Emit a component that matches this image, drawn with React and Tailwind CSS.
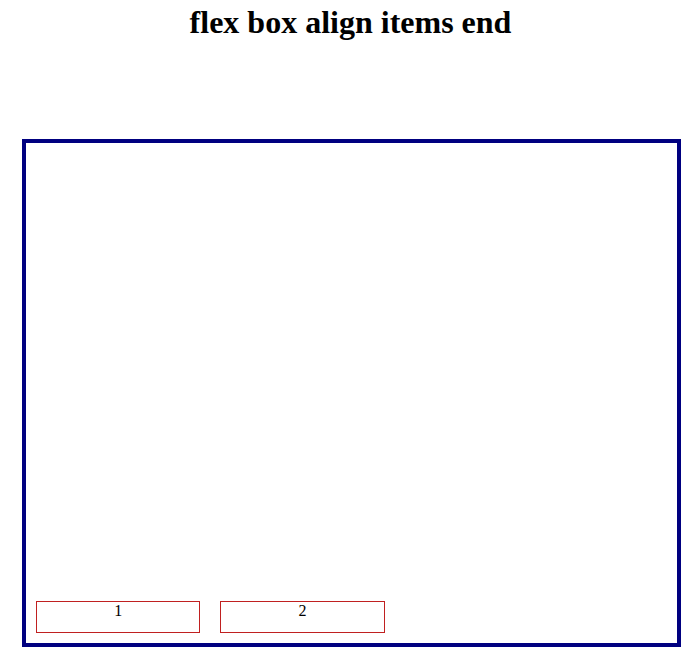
export default function App() {
  return (
    <div className="bg-white min-h-[647px] font-['Liberation_Serif',serif] text-black">
      <h1 className="pl-[10px] pt-[4px] text-center text-[32px] font-bold leading-[37px]">
        flex box align items end
      </h1>
      <div className="ml-[22px] mt-[98px] w-[659px] h-[508px] border-4 border-[#000080] flex items-end">
        {["1", "2"].map((n) => (
          <div
            key={n}
            className="m-[10px] w-[164.4px] h-[32px] border border-[#c02020] text-center text-base leading-[18px]"
          >
            {n}
          </div>
        ))}
      </div>
    </div>
  );
}
